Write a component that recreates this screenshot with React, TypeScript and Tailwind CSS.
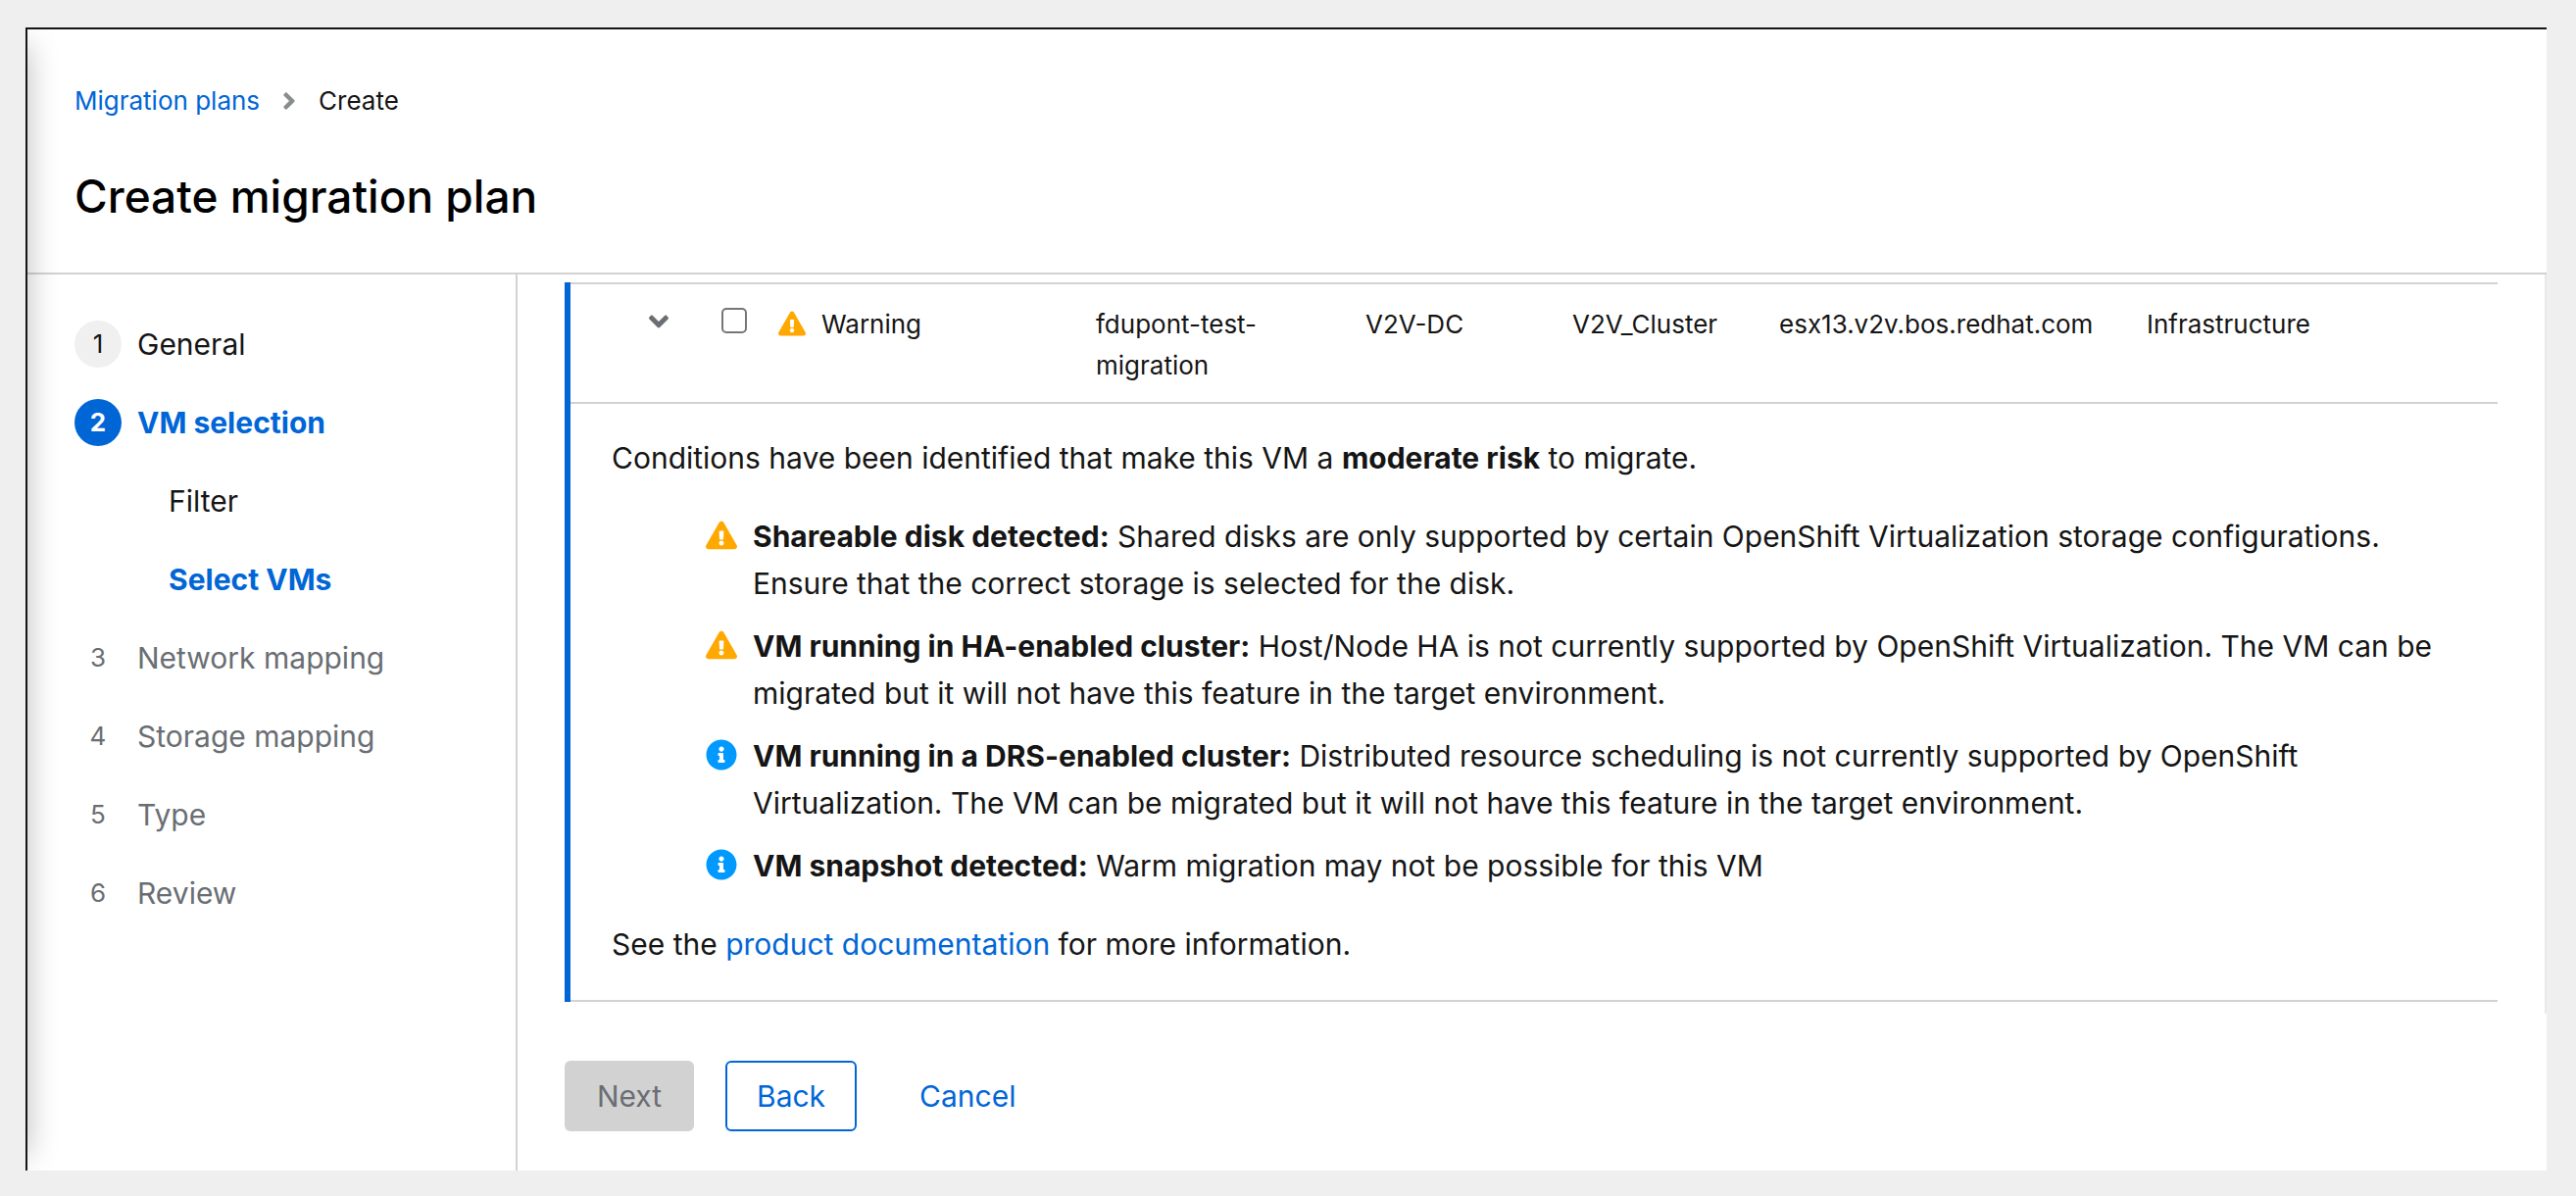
import React from 'react';
import { FaAngleDown, FaAngleRight, FaExclamationTriangle, FaInfoCircle } from 'react-icons/fa';

type Step = { number?: number; label: string; state: 'done' | 'current' | 'pending'; sub?: boolean };

const steps: Step[] = [
  { number: 1, label: 'General', state: 'done' },
  { number: 2, label: 'VM selection', state: 'current' },
  { label: 'Filter', state: 'done', sub: true },
  { label: 'Select VMs', state: 'current', sub: true },
  { number: 3, label: 'Network mapping', state: 'pending' },
  { number: 4, label: 'Storage mapping', state: 'pending' },
  { number: 5, label: 'Type', state: 'pending' },
  { number: 6, label: 'Review', state: 'pending' },
];

const textStyle = {
  done: 'text-[#151515]',
  current: 'font-bold text-[#0066d6]',
  pending: 'text-[#6a6e73]',
};

const bulletStyle = {
  done: 'bg-[#f0f0f0] text-[#151515]',
  current: 'bg-[#0066d6] font-bold text-white',
  pending: 'text-[#6a6e73]',
};

const concerns = [
  {
    kind: 'warning',
    title: 'Shareable disk detected:',
    text: 'Shared disks are only supported by certain OpenShift Virtualization storage configurations. Ensure that the correct storage is selected for the disk.',
  },
  {
    kind: 'warning',
    title: 'VM running in HA-enabled cluster:',
    text: 'Host/Node HA is not currently supported by OpenShift Virtualization. The VM can be migrated but it will not have this feature in the target environment.',
  },
  {
    kind: 'info',
    title: 'VM running in a DRS-enabled cluster:',
    text: 'Distributed resource scheduling is not currently supported by OpenShift Virtualization. The VM can be migrated but it will not have this feature in the target environment.',
  },
  {
    kind: 'info',
    title: 'VM snapshot detected:',
    text: 'Warm migration may not be possible for this VM',
  },
];

function WizardNav() {
  return (
    <nav aria-label="Wizard steps" className="w-[500px] shrink-0 border-r-2 border-[#d2d2d2] pt-[47px] pl-12">
      <ol className="flex flex-col gap-8">
        {steps.map((step) => (
          <li key={step.label} className={step.sub ? 'pl-24' : ''}>
            <button
              type="button"
              disabled={step.state === 'pending'}
              aria-current={step.state === 'current' ? 'step' : undefined}
              className="flex items-center gap-4 text-[30px] leading-[48px]"
            >
              {step.number && (
                <span
                  className={`flex size-12 items-center justify-center rounded-full text-[26px] ${bulletStyle[step.state]}`}
                >
                  {step.number}
                </span>
              )}
              <span className={textStyle[step.state]}>{step.label}</span>
            </button>
          </li>
        ))}
      </ol>
    </nav>
  );
}

function VmTable() {
  const cell = 'border-t-2 border-[#d2d2d2] pt-5 pb-4 pr-4 align-top';
  return (
    <div className="border-l-[6px] border-[#0066d6]">
      <table className="w-full table-fixed border-separate border-spacing-0 text-left text-[26px] leading-[42px]">
        <colgroup>
          <col className="w-[154px]" />
          <col className="w-[58px]" />
          <col className="w-[324px]" />
          <col className="w-[275px]" />
          <col className="w-[211px]" />
          <col className="w-[211px]" />
          <col className="w-[375px]" />
          <col />
        </colgroup>
        <tbody>
          <tr>
            <td className={cell}>
              <button type="button" aria-label="Details" aria-expanded="true" className="ml-[74px] flex h-9 items-center text-[#6a6e73]">
                <FaAngleDown className="size-8" />
              </button>
            </td>
            <td className={cell}>
              <input
                type="checkbox"
                aria-label="Select fdupont-test-migration"
                className="mt-1 block size-[26px] appearance-none rounded-[5px] border-2 border-[#767676] bg-white"
              />
            </td>
            <td className={cell}>
              <span className="flex items-start gap-4">
                <FaExclamationTriangle className="mt-1.5 size-7 text-[#ffa800]" />
                Warning
              </span>
            </td>
            <td className={cell}>fdupont-test-migration</td>
            <td className={cell}>V2V-DC</td>
            <td className={cell}>V2V_Cluster</td>
            <td className={cell}>esx13.v2v.bos.redhat.com</td>
            <td className={cell}>Infrastructure</td>
          </tr>
          <tr>
            <td colSpan={8} className="border-y-2 border-[#d2d2d2] pt-[31px] pr-12 pb-[33px] pl-[42px] text-[30px] leading-[48px]">
              <p>
                Conditions have been identified that make this VM a <strong className="font-bold">moderate risk</strong> to
                migrate.
              </p>
              <ul className="my-8 flex flex-col gap-4 pl-24">
                {concerns.map((item) => (
                  <li key={item.title} className="flex items-start gap-4">
                    {item.kind === 'warning' ? (
                      <FaExclamationTriangle className="mt-[7px] size-8 shrink-0 text-[#ffa800]" />
                    ) : (
                      <FaInfoCircle className="mt-[7px] size-8 shrink-0 text-[#0099ff]" />
                    )}
                    <span>
                      <strong className="font-bold">{item.title}</strong> {item.text}
                    </span>
                  </li>
                ))}
              </ul>
              <p>
                See the{' '}
                <a href="#documentation" className="text-[#0066d6]">
                  product documentation
                </a>{' '}
                for more information.
              </p>
            </td>
          </tr>
        </tbody>
      </table>
    </div>
  );
}

export default function App() {
  return (
    <div className="flex min-h-screen flex-col bg-[#efefef] pt-7 pr-[30px] pb-[26px] pl-[26px] font-['Inter',sans-serif] text-[#151515]">
      <div className="relative flex grow flex-col border-t-2 border-l-2 border-[#151515] bg-white">
        <div className="pointer-events-none absolute inset-y-0 left-0 w-12 overflow-hidden">
          <div className="absolute inset-y-4 -left-8 w-8 shadow-[0_0_32px_rgba(0,0,0,0.27)]" />
        </div>
        <header className="border-b-2 border-[#d2d2d2] px-12 pt-[52px] pb-12">
          <nav aria-label="Breadcrumb">
            <ol className="flex items-center gap-4 text-[26px] leading-[42px]">
              <li>
                <a href="#plans" className="text-[#0066d6]">
                  Migration plans
                </a>
              </li>
              <li className="flex items-center gap-4">
                <FaAngleRight className="size-7 text-[#8a8d90]" />
                <span aria-current="page">Create</span>
              </li>
            </ol>
          </nav>
          <h1 className="mt-[46px] text-[46px] leading-[60px] font-medium text-black">Create migration plan</h1>
        </header>
        <div className="flex grow">
          <WizardNav />
          <div className="flex min-w-0 grow flex-col">
            <main className="grow border-r-2 border-[#e8e8e8] px-12 pt-2 pb-3">
              <VmTable />
            </main>
            <footer className="flex gap-8 px-12 pt-12 pb-10 text-[30px] leading-[48px]">
              <button type="button" disabled className="h-[72px] min-w-[132px] rounded-md bg-[#d2d2d2] px-8 text-[#6a6e73]">
                Next
              </button>
              <button type="button" className="h-[72px] min-w-[134px] rounded-md border-2 border-[#0066d6] px-[30px] text-[#0066d6]">
                Back
              </button>
              <button type="button" className="h-[72px] px-8 text-[#0066d6]">
                Cancel
              </button>
            </footer>
          </div>
        </div>
      </div>
    </div>
  );
}
